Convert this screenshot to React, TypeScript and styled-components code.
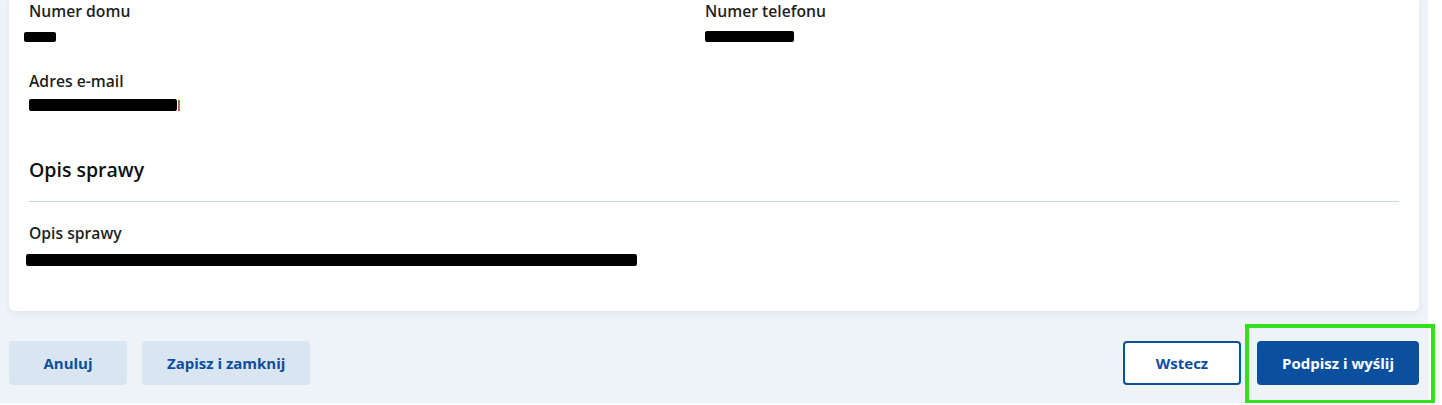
import React from "react";
import styled, { createGlobalStyle } from "styled-components";

const GlobalStyle = createGlobalStyle`
  body {
    margin: 0;
    background: #ffffff;
    font-family: "Open Sans", "Liberation Sans", sans-serif;
  }
`;

const Page = styled.div`
  width: 1428px;
  height: 403px;
  box-sizing: border-box;
  padding: 0 9px;
  background: #eef3f8;
  display: flex;
  flex-direction: column;
`;

const Card = styled.section`
  background: #ffffff;
  border-radius: 0 0 6px 6px;
  box-shadow: 0 2px 6px rgba(40, 60, 90, 0.08);
  padding: 1px 20px 45px;
`;

const FieldRow = styled.div`
  display: grid;
  grid-template-columns: 676px 1fr;
  margin-bottom: 29px;
`;

const Field = styled.div`
  display: flex;
  flex-direction: column;
`;

const Label = styled.div`
  font-size: 15.7px;
  line-height: 20px;
  font-weight: 600;
  color: #1f1f1f;
`;

const Value = styled.div<{ $offset: number; $shift?: number }>`
  display: flex;
  align-items: flex-end;
  margin-top: ${(p) => p.$offset}px;
  margin-left: ${(p) => p.$shift ?? 0}px;
  font-size: 15px;
  line-height: 12px;
  color: #333333;
`;

const Redacted = styled.span<{ $w: number; $h: number }>`
  display: inline-block;
  width: ${(p) => p.$w}px;
  height: ${(p) => p.$h}px;
  background: #000000;
  border-radius: 2px;
`;

const SectionTitle = styled.h2`
  margin: 46px 0 0;
  font-size: 19.5px;
  line-height: 26px;
  font-weight: 600;
  color: #111111;
`;

const Divider = styled.hr`
  margin: 18px 0 21px;
  border: 0;
  height: 1px;
  background: #c3d8f1;
`;

const Footer = styled.div`
  margin-top: 30px;
  display: flex;
  justify-content: space-between;
  align-items: center;
`;

const Group = styled.div<{ $gap: number }>`
  display: flex;
  gap: ${(p) => p.$gap}px;
`;

const Button = styled.button<{ $variant: "secondary" | "outline" | "primary" }>`
  box-sizing: border-box;
  min-width: 118px;
  height: 44px;
  padding: 0 23px;
  border-radius: 4px;
  font-family: "Open Sans", "Liberation Sans", sans-serif;
  font-size: 15px;
  font-weight: 700;
  cursor: pointer;
  border: 2px solid
    ${(p) => (p.$variant === "secondary" ? "#dae5f2" : "#0b4f9f")};
  background: ${(p) =>
    p.$variant === "secondary"
      ? "#dae5f2"
      : p.$variant === "primary"
      ? "#0b4f9f"
      : "#ffffff"};
  color: ${(p) => (p.$variant === "primary" ? "#ffffff" : "#0b4f9f")};
`;

const Highlight = styled.span`
  position: relative;
  display: inline-flex;

  &::after {
    content: "";
    position: absolute;
    left: -12px;
    right: -16px;
    top: -17px;
    bottom: -19px;
    border: 4px solid #33e01b;
    pointer-events: none;
  }
`;

export default function App() {
  return (
    <>
      <GlobalStyle />
      <Page>
        <Card>
          <FieldRow>
            <Field>
              <Label>Numer domu</Label>
              <Value $offset={11} $shift={-5}>
                <Redacted $w={32} $h={10} />
              </Value>
            </Field>
            <Field>
              <Label>Numer telefonu</Label>
              <Value $offset={10}>
                <Redacted $w={89} $h={11} />
              </Value>
            </Field>
          </FieldRow>
          <Field>
            <Label>Adres e-mail</Label>
            <Value $offset={8}>
              <Redacted $w={148} $h={12} />
              <span>l</span>
            </Value>
          </Field>
          <SectionTitle>Opis sprawy</SectionTitle>
          <Divider />
          <Field>
            <Label>Opis sprawy</Label>
            <Value $offset={11} $shift={-3}>
              <Redacted $w={611} $h={12} />
            </Value>
          </Field>
        </Card>
        <Footer>
          <Group $gap={15}>
            <Button $variant="secondary">Anuluj</Button>
            <Button $variant="secondary">Zapisz i zamknij</Button>
          </Group>
          <Group $gap={16}>
            <Button $variant="outline">Wstecz</Button>
            <Highlight>
              <Button $variant="primary">Podpisz i wyślij</Button>
            </Highlight>
          </Group>
        </Footer>
      </Page>
    </>
  );
}
